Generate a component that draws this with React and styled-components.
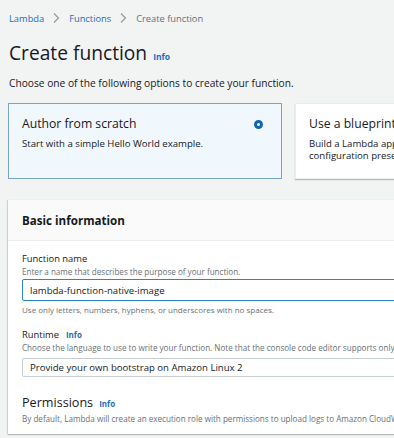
import React from 'react';
import styled, { createGlobalStyle } from "styled-components";

const GlobalStyle = createGlobalStyle`
    html, body {
        margin: 0;
        padding: 0;
        background: #f2f3f3;
        overflow: hidden;
    }
    body {
        font-family: "Open Sans", "Liberation Sans", sans-serif;
        color: #16191f;
    }
`

function Info({ size }) {
    return <InfoLink size={size}>Info</InfoLink>;
}

function Chevron() {
    return (
        <svg width="7" height="10" viewBox="0 0 7 10">
            <path d="M1 0.5 L5.5 5 L1 9.5" fill="none" stroke="#8d989a" strokeWidth="1.1" />
        </svg>
    );
}

function App() {
    return (
        <Page>
            <GlobalStyle />
            <Breadcrumbs>
                <Crumb href="#">Lambda</Crumb>
                <Chevron />
                <Crumb href="#">Functions</Crumb>
                <Chevron />
                <Current>Create function</Current>
            </Breadcrumbs>

            <TitleRow>
                <Title>Create function</Title>
                <Info size={8.5} />
            </TitleRow>
            <Lead>Choose one of the following options to create your function.</Lead>

            <Tiles>
                <Tile selected>
                    <TileHead>
                        <TileTitle>Author from scratch</TileTitle>
                        <Radio />
                    </TileHead>
                    <TileText>Start with a simple Hello World example.</TileText>
                </Tile>
                <Tile>
                    <TileHead>
                        <TileTitle>Use a blueprint</TileTitle>
                    </TileHead>
                    <TileText>Build a Lambda application from sample code and configuration presets for common use cases.</TileText>
                </Tile>
            </Tiles>

            <Panel>
                <PanelHeader>Basic information</PanelHeader>
                <PanelBody>
                    <Label>Function name</Label>
                    <Desc>Enter a name that describes the purpose of your function.</Desc>
                    <Input focused>lambda-function-native-image</Input>
                    <Hint>Use only letters, numbers, hyphens, or underscores with no spaces.</Hint>

                    <Label spaced>Runtime <Info size={8} /></Label>
                    <Desc>Choose the language to use to write your function. Note that the console code editor supports only Node.js, Python, and Ruby.</Desc>
                    <Input>Provide your own bootstrap on Amazon Linux 2</Input>

                    <SectionTitle>Permissions <Info size={8} /></SectionTitle>
                    <Desc>By default, Lambda will create an execution role with permissions to upload logs to Amazon CloudWatch Logs.</Desc>
                </PanelBody>
            </Panel>
        </Page>
    );
}

export default App;

const Page = styled.div`
    width: 394px;
    height: 438px;
    padding-left: 8px;
    box-sizing: border-box;
    overflow: hidden;
`
const Breadcrumbs = styled.nav`
    display: flex;
    align-items: center;
    gap: 9px;
    height: 36px;
    padding-left: 1px;
    font-size: 9.3px;
`
const Crumb = styled.a`
    color: #1d6eb8;
    text-decoration: none;
`
const Current = styled.span`
    color: #687078;
`
const TitleRow = styled.div`
    display: flex;
    align-items: baseline;
    gap: 6px;
    margin-top: 4px;
    padding-left: 1px;
`
const Title = styled.h1`
    margin: 0;
    font-size: 19.2px;
    font-weight: 400;
    line-height: 26px;
`
const InfoLink = styled.span`
    color: #1d6eb8;
    font-size: ${p => p.size}px;
    font-weight: 700;
`
const Lead = styled.p`
    margin: 10px 0 0 1px;
    font-size: 10.2px;
    line-height: 14px;
`
const Tiles = styled.div`
    display: flex;
    gap: 13px;
    margin-top: 13px;
    width: 600px;
`
const Tile = styled.div`
    flex: 0 0 274px;
    min-width: 0;
    box-sizing: border-box;
    height: 76px;
    padding: 12px 14px 0 13px;
    background: ${p => p.selected ? '#f1f8fd' : '#ffffff'};
    border: 1px solid ${p => p.selected ? '#77a3c9' : '#eaeded'};
    box-shadow: ${p => p.selected ? 'none' : '0 1px 1px 0 rgba(0,28,36,0.25)'};
`
const TileHead = styled.div`
    display: flex;
    justify-content: space-between;
    align-items: center;
    height: 16px;
`
const TileTitle = styled.div`
    font-size: 12.2px;
    line-height: 16px;
`
const Radio = styled.span`
    width: 3px;
    height: 3px;
    border-radius: 50%;
    border: 3px solid #1066b0;
    background: #fff;
    margin-right: 4px;
`
const TileText = styled.div`
    font-size: 9.6px;
    line-height: 12px;
    margin-top: 6px;
`
const Panel = styled.section`
    margin-top: 21px;
    background: #fff;
    box-shadow: 0 1px 1px 0 rgba(0,28,36,0.25), -1px 0 1px 0 rgba(0,28,36,0.12);
    width: 420px;
    height: 234px;
`
const PanelHeader = styled.h2`
    margin: 0;
    height: 41px;
    box-sizing: border-box;
    padding: 0 14px;
    display: flex;
    align-items: center;
    background: #fafafa;
    border-bottom: 1px solid #eaeded;
    font-size: 11.6px;
    font-weight: 700;
`
const PanelBody = styled.div`
    padding: 11px 14px 0;
    display: flex;
    flex-direction: column;
    align-items: stretch;
`
const Label = styled.div`
    font-size: 9.4px;
    line-height: 14px;
    margin-top: ${p => p.spaced ? '12px' : '0'};
    display: flex;
    align-items: baseline;
    gap: 7px;
`
const Desc = styled.div`
    font-size: 8.1px;
    line-height: 12px;
    color: #687078;
    white-space: nowrap;
`
const Input = styled.div`
    margin-top: ${p => p.focused ? '1px' : '4px'};
    height: ${p => p.focused ? '22px' : '19px'};
    box-sizing: border-box;
    border: 1px solid ${p => p.focused ? '#2b86c8' : '#c6cdcf'};
    border-radius: 2px;
    padding: 0 7px;
    display: flex;
    align-items: center;
    font-size: 9.6px;
`
const Hint = styled.div`
    margin-top: 3px;
    font-size: 8px;
    line-height: 12px;
    color: #687078;
`
const SectionTitle = styled.div`
    margin-top: 16px;
    font-size: 12.6px;
    line-height: 19px;
    display: flex;
    align-items: baseline;
    gap: 6px;
`
